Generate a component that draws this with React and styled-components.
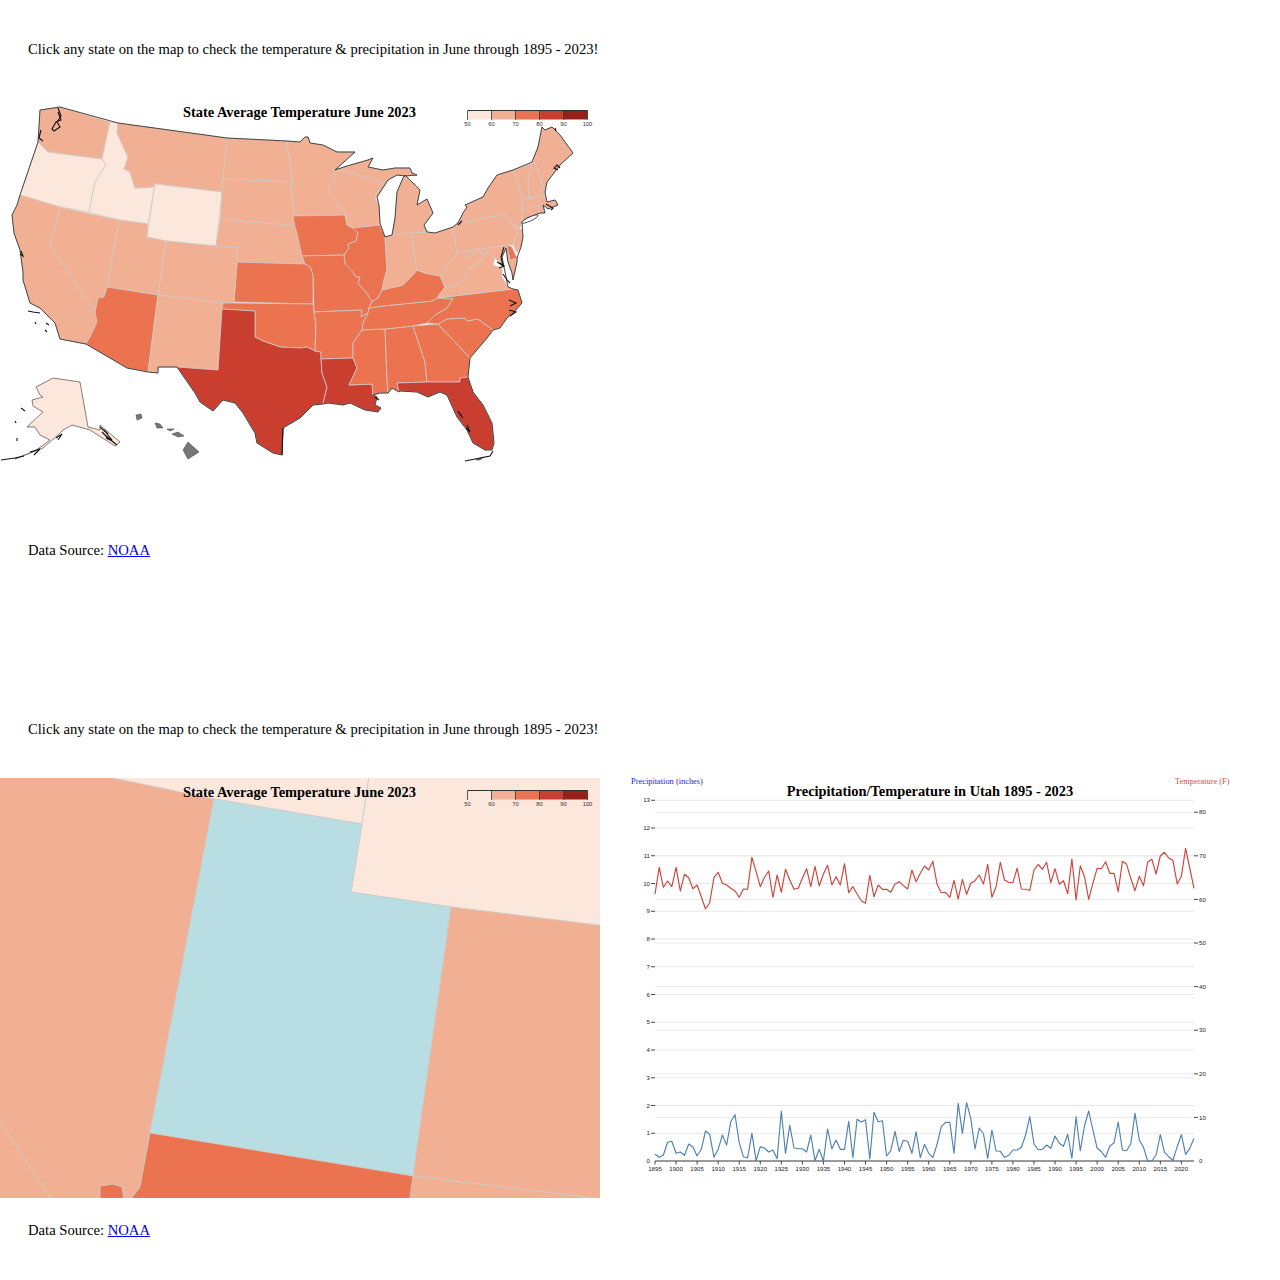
import styled, { createGlobalStyle } from "styled-components";

const GlobalStyle = createGlobalStyle`
  body {
    margin: 0;
    background: #ffffff;
    font-family: "Liberation Serif", "Times New Roman", serif;
  }
`;

const SHADE = ["#fbe7dc", "#f1b094", "#eb7350", "#ca3e30", "#962018"];
const [S1, S2, S3, S4] = SHADE;

const states = [
  { id: "WA", fill: S2, d: "40,110 38,142 48,152 70,155 102,159 110,122 60,107" },
  { id: "OR", fill: S1, d: "38,142 20,195 60,207 89,212 95,182 106,165 102,159 70,155 48,152" },
  { id: "ID", fill: S1, d: "110,122 118,123 117,133 128,157 124,169 130,172 135,188 153,187 155,184 148,224 119,220 89,212 95,182 106,165 102,159" },
  { id: "MT", fill: S2, d: "118,123 227,138 222,192 155,184 153,187 135,188 130,172 124,169 128,157 117,133" },
  { id: "WY", fill: S1, d: "155,184 222,192 216,246 166,241 147,237" },
  { id: "ND", fill: S2, d: "227,138 287,141 293,182 223,179" },
  { id: "SD", fill: S2, d: "223,179 293,182 291,187 294,215 295,227 287,225 220,219" },
  { id: "NE", fill: S2, d: "220,219 287,225 295,227 297,233 299,243 302,256 305,264 237,262 237,247 216,246" },
  { id: "MN", fill: S2, d: "287,141 300,142 305,137 308,137 310,143 323,145 337,152 355,152 335,170 335,180 328,187 330,195 345,212 345,215 293,216 294,215 291,187 293,182" },
  { id: "IA", fill: S3, d: "293,216 345,215 347,225 353,228 358,233 356,241 348,244 349,248 344,255 302,256 299,243 297,233 295,227" },
  { id: "WI", fill: S2, d: "335,170 335,180 328,187 330,195 345,212 347,225 353,228 379,225 380,223 379,205 375,197 382,182 352,173" },
  { id: "IL", fill: S3, d: "353,228 380,225 385,237 387,270 384,280 382,290 378,298 372,302 368,295 358,283 360,277 356,277 353,272 345,264 344,255 349,248 348,244 356,241 358,233" },
  { id: "MO", fill: S3, d: "302,256 344,255 345,264 353,272 356,277 360,277 358,283 368,295 372,302 369,308 368,313 361,317 362,310 314,312 313,275 310,267 305,264" },
  { id: "KS", fill: S3, d: "237,262 305,264 310,267 313,275 313,304 234,302" },
  { id: "CO", fill: S2, d: "166,241 216,246 237,247 237,262 234,302 233,303 223,303 158,295" },
  { id: "UT", fill: S2, d: "119,220 148,224 147,237 166,241 158,295 107,287" },
  { id: "NV", fill: S2, d: "60,207 119,220 107,287 104,297 98,298 95,312 50,245" },
  { id: "CA", fill: S2, d: "20,195 60,207 50,245 95,312 97,322 90,337 86,344 60,339 55,323 40,308 30,303 23,280 23,272 20,250 14,233 12,215 17,205" },
  { id: "AZ", fill: S3, d: "107,287 158,295 148,372 127,368 86,344 90,337 97,322 95,312 98,298 104,297" },
  { id: "NM", fill: S2, d: "158,295 223,303 222,309 218,370 177,367 158,367 158,373 148,372" },
  { id: "OK", fill: S3, d: "223,303 233,303 313,304 314,312 316,325 315,351 307,347 300,348 280,347 263,341 255,337 255,311 222,309" },
  { id: "TX", fill: S4, d: "222,309 255,311 255,337 263,341 280,347 300,348 307,347 315,351 321,352 321,359 322,373 327,387 323,404 313,405 300,418 283,428 282,455 273,453 257,443 255,433 243,413 235,403 223,400 213,411 200,402 195,393 177,367 218,370" },
  { id: "AR", fill: S3, d: "314,312 362,310 361,317 368,313 363,323 362,330 353,343 353,358 321,359 321,352 315,351 316,325" },
  { id: "LA", fill: S4, d: "321,359 353,358 357,368 349,385 372,384 373,395 377,397 375,405 381,408 378,412 365,410 350,403 343,405 328,403 323,404 327,387 322,373" },
  { id: "MS", fill: S3, d: "362,330 385,329 387,380 388,393 380,393 373,395 372,384 349,385 357,368 353,358 353,343" },
  { id: "AL", fill: S3, d: "385,329 413,326 425,362 427,382 397,383 399,392 392,388 388,393 387,380" },
  { id: "GA", fill: S3, d: "413,326 438,324 470,358 468,377 460,378 460,382 427,382 425,362" },
  { id: "SC", fill: S3, d: "438,324 447,319 465,318 467,321 478,319 493,330 487,338 470,358" },
  { id: "FL", fill: S4, d: "397,383 427,382 460,382 460,378 468,377 473,392 483,405 492,423 494,443 492,450 485,450 473,443 467,430 457,417 447,395 440,392 428,397 417,392 400,391 399,392" },
  { id: "NC", fill: S3, d: "437,298 513,289 518,290 522,303 513,313 507,318 500,328 493,330 478,319 467,321 465,318 447,319 438,324 427,323 435,315 447,308 453,299" },
  { id: "TN", fill: S3, d: "369,308 383,306 432,301 437,298 453,299 447,308 435,315 427,323 413,326 385,329 362,330 363,323 368,313" },
  { id: "KY", fill: S3, d: "372,302 378,298 382,290 390,288 403,285 410,278 417,270 425,273 440,276 445,287 437,298 432,301 383,306 369,308" },
  { id: "IN", fill: S2, d: "385,237 392,235 411,233 417,270 410,278 403,285 390,288 382,290 384,280 387,270" },
  { id: "OH", fill: S2, d: "411,233 427,232 435,233 453,227 457,253 450,262 440,276 425,273 417,270" },
  { id: "MI", fill: S2, d: "392,235 395,218 397,192 403,178 405,175 420,190 417,205 427,199 433,213 424,225 427,232 411,233" },
  { id: "MIU", fill: S2, d: "335,170 347,166 368,160 373,158 368,167 383,170 395,168 410,168 412,173 417,175 405,176 397,175 388,180 377,197 375,197 382,182 352,173" },
  { id: "WV", fill: S2, d: "457,253 468,251 468,258 480,250 482,255 487,252 482,260 470,268 463,280 455,287 445,287 440,276 450,262" },
  { id: "VA", fill: S2, d: "445,287 455,287 463,280 470,268 482,260 487,252 495,258 493,265 502,268 502,277 508,287 513,289 437,298" },
  { id: "MD", fill: S2, d: "468,251 508,245 510,260 517,258 517,262 513,280 512,273 508,262 506,248 502,257 504,267 495,258 487,252 482,255 480,250 468,258" },
  { id: "DE", fill: S3, d: "507,245 512,247 517,258 510,260" },
  { id: "PA", fill: S2, d: "453,227 458,223 505,214 513,225 518,233 513,245 508,245 468,251 457,253" },
  { id: "NJ", fill: S2, d: "513,225 522,230 523,237 521,247 517,253 513,245 518,233" },
  { id: "NY", fill: S2, d: "458,223 463,213 467,207 465,205 483,197 488,188 497,175 513,170 518,183 522,200 522,209 522,222 520,228 513,225 505,214" },
  { id: "VT", fill: S2, d: "513,170 532,163 528,180 529,198 522,200 518,183" },
  { id: "NH", fill: S2, d: "532,162 535,162 545,192 545,195 529,198 528,180" },
  { id: "ME", fill: S2, d: "532,162 538,147 542,127 545,130 552,127 560,135 573,153 560,165 547,182 545,192 535,162" },
  { id: "MA", fill: S2, d: "522,200 545,195 547,202 555,200 558,205 548,209 543,205 522,209" },
  { id: "CT", fill: S2, d: "522,209 538,205 540,213 527,218 522,222" },
  { id: "RI", fill: S2, d: "538,205 543,205 545,213 540,213" },
];

const coastline =
  "60,107 118,123 227,138 287,141 300,142 305,137 308,137 310,143 323,145 337,152 355,152 335,170 347,166 368,160 373,158 368,167 383,170 395,168 410,168 412,173 417,175 405,176 397,175 388,180 377,197 379,205 380,223 385,237 392,235 395,218 397,192 403,178 405,175 420,190 417,205 427,199 433,213 424,225 427,232 435,233 453,227 458,223 463,213 467,207 465,205 483,197 488,188 497,175 513,170 532,162 538,147 542,127 545,130 552,127 560,135 573,153 560,165 547,182 545,192 547,202 555,200 558,205 548,209 543,205 545,213 540,213 527,218 522,222 523,237 521,247 517,258 517,262 513,280 512,273 508,262 506,248 502,257 504,267 508,287 513,289 518,290 522,303 513,313 507,318 500,328 493,330 487,338 470,358 468,377 473,392 483,405 492,423 494,443 492,450 485,450 473,443 467,430 457,417 447,395 440,392 428,397 417,392 400,391 399,392 392,388 388,393 380,393 373,395 377,397 375,405 381,408 378,412 365,410 350,403 343,405 328,403 323,404 313,405 300,418 283,428 282,455 273,453 257,443 255,433 243,413 235,403 223,400 213,411 200,402 195,393 177,367 158,367 158,373 148,372 127,368 86,344 60,339 55,323 40,308 30,303 23,280 23,272 20,250 14,233 12,215 17,205 20,195 38,142 40,110 60,107";

// inlets and sounds that read as black scribbles at this scale
const inlets = [
  "58,108 61,116 57,122 60,127 54,131 52,129 56,122 61,120 58,112",
  "41,130 39,138 43,141",
  "21,251 23,256 20,254",
  "504,247 501,257 503,266 500,263",
  "497,262 504,266 499,268",
  "503,274 507,280 510,283",
  "509,300 516,303 510,306",
  "509,310 516,312 510,316",
  "555,128 556,131",
  "558,170 554,168 557,165 560,168",
  "462,221 458,225",
  "546,204 553,208 551,210",
  "467,425 470,432 466,428",
  "463,418 458,411 461,416",
  "283,428 282.5,440 282,455",
  "375,397 379,400",
  // channel islands
  "28,311 33,312 40,313",
  "35,322 36,324",
  "46,323 49,325",
  "45,330 47,332",
];

const alaska =
  "36,387 53,378 80,382 88,427 100,430 100,425 120,442 115,446 90,430 72,425 63,430 58,435 43,448 30,453 15,459 35,451 50,440 40,435 35,427 27,427 43,412 33,406 32,400 43,397 40,395";

const alaskaScribble = [
  "100,427 108,434 104,430 112,440 108,438 117,445 112,441 106,436",
  "102,432 110,440 106,438",
  "58,440 62,434 56,438",
  "30,452 40,449 34,455",
  "1,460 15,458 24,456",
  "21,408 25,411",
  "15,421 16,423",
  "17,438 17,441",
];

const hawaii = [
  "188,442 199,452 188,459 183,450",
  "136,415 141,414 142,418 137,420",
  "155,423 160,424 163,428 157,428",
  "167,429 174,429 170,431",
  "172,434 178,432 184,436 178,437",
];

const legendTicks = [50, 60, 70, 80, 90, 100];

// Utah view runs past the panel on every side, the svg crops it
const ZoomMapShapes = () => (
  <>
    <StateShape $fill={S2} points="-5,770 75,770 214,799 150,1133 140,1187 126,1205 122,1187 113,1184 100,1186 100,1205 55,1205 -5,1114" />
    <StateShape $fill={S2} points="-5,1114 55,1205 -5,1205" />
    <StateShape $fill={S1} points="75,770 370,770 362,824 214,799" />
    <StateShape $fill={S1} points="370,770 605,770 605,926 451,907 351,892 362,824" />
    <StateShape $fill="#b8dee3" points="214,799 362,824 351,892 451,907 413,1176 150,1133" />
    <StateShape $fill={S2} points="451,907 605,926 605,1205 409,1205 413,1176" />
    <StateShape $fill={S3} points="150,1133 413,1176 409,1205 126,1205 140,1187" />
    <StateShape $fill={S3} points="100,1186 113,1184 122,1187 125,1205 100,1205" />
    <polyline points="413,1176 610,1200" fill="none" stroke="#cfcfcf" strokeWidth="0.8" />
  </>
);

const UsMapShapes = () => (
  <>
    {states.map((s) => (
      <StateShape key={s.id} $fill={s.fill} points={s.d} />
    ))}
    <DarkLine points={coastline} />
    {inlets.map((p) => (
      <Scribble key={p} points={p} />
    ))}
    <Lake cx="530" cy="219" rx="9" ry="2" transform="rotate(-25 530 219)" />
    <Alaska points={alaska} />
    {alaskaScribble.map((p) => (
      <Scribble key={p} points={p} />
    ))}
    {hawaii.map((p) => (
      <Island key={p} points={p} />
    ))}
    <Island points="476,460 484,457 480,460" />
    <Scribble points="465,461 490,456 493,451" />
  </>
);

function StateMap({ top, zoomed }) {
  return (
    <MapSvg viewBox={`0 ${top} 600 420`}>
      {zoomed ? <ZoomMapShapes /> : <UsMapShapes />}
      <MapTitle x="299.5" y={top + 18.5}>
        State Average Temperature June 2023
      </MapTitle>
      <g transform={`translate(0 ${top})`}>
        {SHADE.map((c, i) => (
          <rect key={c} x={467.5 + i * 24} y="12.5" width="24" height="9" fill={c} />
        ))}
        <line x1="467.5" x2="587.5" y1="12.5" y2="12.5" stroke="#333" strokeWidth="1" />
        {legendTicks.map((t, i) => (
          <g key={t}>
            <line x1={467.5 + i * 24} x2={467.5 + i * 24} y1="12.5" y2="22" stroke="#333" strokeWidth="0.8" />
            <LegendLabel x={467.5 + i * 24} y="28">
              {t}
            </LegendLabel>
          </g>
        ))}
      </g>
    </MapSvg>
  );
}

// June readings for Utah, traced from the original chart
const tempReadings = [
  372, 292, 352, 333, 350, 292, 363, 313, 323, 356, 345, 380, 417, 398, 322, 307, 340, 345, 355, 363, 382, 357, 358, 262, 305, 350, 322, 303, 382, 315, 367, 298, 330, 358, 355, 325, 296, 350, 289, 348, 312, 286, 345, 320, 345, 281, 368, 350, 372, 392, 400, 316, 380, 345, 358, 358, 367, 342, 335, 347, 357, 300, 335, 310, 288, 300, 274,
  343, 368, 367, 382, 331, 387, 328, 373, 340, 332, 315, 342, 283, 382, 350, 277, 330, 337, 338, 295, 357, 358, 361, 300, 283, 298, 277, 338, 296, 343, 332, 371, 267, 390, 287, 320, 388, 340, 295, 296, 275, 310, 310, 365, 274, 283, 325, 362, 319, 347, 276, 268, 312, 258, 247, 264, 271, 342, 318, 235, 295, 355,
];
const rainReadings = [
  193, 202, 195, 157, 154, 190, 186, 196, 162, 170, 198, 178, 123, 133, 202, 178, 135, 165, 95, 74, 158, 200, 204, 130, 212, 170, 174, 186, 180, 206, 63, 190, 106, 174, 176, 176, 186, 135, 212, 178, 213, 117, 177, 150, 178, 178, 94, 203, 88, 96, 89, 207, 67, 95, 92, 198, 182, 124, 184, 151, 154, 190, 125, 203, 163, 190,
  203, 162, 110, 97, 97, 190, 40, 130, 38, 85, 177, 114, 132, 205, 120, 183, 184, 202, 196, 180, 180, 172, 135, 80, 162, 179, 178, 165, 175, 138, 160, 169, 133, 205, 80, 182, 108, 63, 120, 174, 185, 202, 168, 159, 96, 180, 182, 161, 70, 150, 172, 213, 213, 195, 134, 187, 200, 211, 170, 134, 193, 175, 145,
];

const PLOT_LEFT = 655;
const PLOT_RIGHT = 1194;
const BASELINE = 1161;
const yearX = (i) => PLOT_LEFT + (i * (PLOT_RIGHT - PLOT_LEFT)) / 128;
const linePoints = (readings, top) =>
  readings.map((v, i) => `${yearX(i).toFixed(1)},${(top + v / 3).toFixed(1)}`).join(" ");

const leftTicks = Array.from({ length: 14 }, (_, i) => i);
const rightTicks = Array.from({ length: 9 }, (_, i) => i * 10);
const yearTicks = Array.from({ length: 26 }, (_, i) => i * 5);

function UtahChart() {
  return (
    <ChartSvg viewBox="620 770 640 428">
      <AxisCaption x="631" y="784" $color="#2222dd">
        Precipitation (inches)
      </AxisCaption>
      <AxisCaption x="1175" y="784" $color="#d2504a">
        Temperature (F)
      </AxisCaption>
      <ChartTitle x="930" y="795.5">
        Precipitation/Temperature in Utah 1895 - 2023
      </ChartTitle>

      {leftTicks.map((t) => {
        const y = BASELINE - t * 27.75;
        return (
          <g key={t}>
            <GridLine x1={PLOT_LEFT} x2={PLOT_RIGHT} y1={y} y2={y} />
            {t > 0 && <TickLine x1="651" x2={PLOT_LEFT} y1={y} y2={y} />}
            <TickLabel x="650" y={y + 2.2} $anchor="end">
              {t}
            </TickLabel>
          </g>
        );
      })}
      {rightTicks.map((t) => {
        const y = BASELINE - t * 4.36;
        return (
          <g key={t}>
            <GridLine x1={PLOT_LEFT} x2={PLOT_RIGHT} y1={y} y2={y} />
            {t > 0 && <TickLine x1={PLOT_RIGHT} x2="1198" y1={y} y2={y} />}
            <TickLabel x="1199" y={y + 2.2}>
              {t}
            </TickLabel>
          </g>
        );
      })}

      <TickLine x1={PLOT_LEFT} x2={PLOT_RIGHT} y1={BASELINE} y2={BASELINE} />
      {yearTicks.map((i) => (
        <g key={i}>
          <TickLine x1={yearX(i)} x2={yearX(i)} y1={BASELINE} y2={BASELINE + 3.5} />
          <TickLabel x={yearX(i)} y={BASELINE + 9.5} $anchor="middle">
            {1895 + i}
          </TickLabel>
        </g>
      ))}

      <DataLine points={linePoints(tempReadings, 770)} $color="#d0423a" />
      <DataLine points={linePoints(rainReadings, 1090)} $color="#4f81b0" />
    </ChartSvg>
  );
}

function MapSection({ top, zoomed }) {
  return (
    <Section>
      <Intro>Click any state on the map to check the temperature &amp; precipitation in June through 1895 - 2023!</Intro>
      <Row>
        <StateMap top={top} zoomed={zoomed} />
        {zoomed && <UtahChart />}
      </Row>
      <Source>
        Data Source: <a href="#noaa">NOAA</a>
      </Source>
    </Section>
  );
}

export default function App() {
  return (
    <>
      <GlobalStyle />
      <MapSection top={98} />
      <MapSection top={778} zoomed />
    </>
  );
}

const Section = styled.section`
  height: 680px;
  padding-top: 40px;
  box-sizing: border-box;

  & + & {
    height: auto;
  }
`;

const Intro = styled.p`
  margin: 0 0 32px 28px;
  font-size: 14.65px;
  line-height: 18px;
  color: #000;
`;

const Row = styled.div`
  display: flex;
  gap: 20px;
  align-items: flex-start;
`;

const Source = styled.p`
  margin: 23px 0 0 28px;
  font-size: 14.65px;
  line-height: 18px;
  color: #000;
`;

const MapSvg = styled.svg`
  display: block;
  width: 600px;
  height: 420px;
  margin-top: 8px;
  flex: none;
`;

const ChartSvg = styled.svg`
  display: block;
  width: 640px;
  height: 428px;
  flex: none;
`;

const StateShape = styled.polygon`
  fill: ${(p) => p.$fill};
  stroke: #cfc9c4;
  stroke-width: 0.8;
  stroke-linejoin: round;
`;

const DarkLine = styled.polyline`
  fill: none;
  stroke: #333;
  stroke-width: 0.9;
  stroke-linejoin: round;
`;

const Scribble = styled.polyline`
  fill: none;
  stroke: #111;
  stroke-width: 1.1;
`;

const Lake = styled.ellipse`
  fill: #fff;
  stroke: #222;
  stroke-width: 0.7;
`;

const Alaska = styled.polygon`
  fill: ${S1};
  stroke: #5a4a44;
  stroke-width: 0.7;
`;

const Island = styled.polygon`
  fill: #777;
  stroke: #333;
  stroke-width: 0.5;
`;

const MapTitle = styled.text`
  font-family: "Liberation Serif", serif;
  font-size: 14.4px;
  font-weight: 700;
  text-anchor: middle;
  fill: #000;
`;

const ChartTitle = styled(MapTitle)``;

const LegendLabel = styled.text`
  font-family: "Liberation Sans", Arial, sans-serif;
  font-size: 5.8px;
  text-anchor: middle;
  fill: #333;
`;

const AxisCaption = styled.text`
  font-family: "Liberation Serif", serif;
  font-size: 8.4px;
  fill: ${(p) => p.$color};
`;

const GridLine = styled.line`
  stroke: #e8e8e8;
  stroke-width: 1;
`;

const TickLine = styled.line`
  stroke: #333;
  stroke-width: 0.9;
`;

const TickLabel = styled.text`
  font-family: "Liberation Sans", Arial, sans-serif;
  font-size: 6.1px;
  text-anchor: ${(p) => p.$anchor || "start"};
  fill: #222;
`;

const DataLine = styled.polyline`
  fill: none;
  stroke: ${(p) => p.$color};
  stroke-width: 1.15;
  stroke-linejoin: round;
`;
